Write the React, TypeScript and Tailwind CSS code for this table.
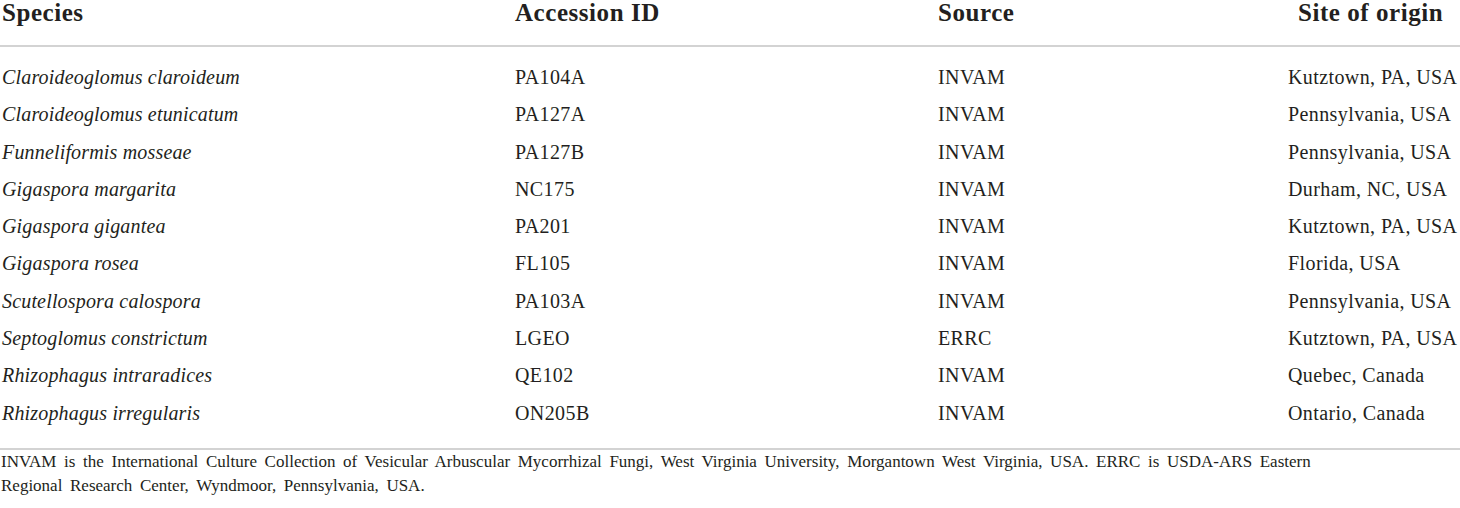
const rows = [
  ["Claroideoglomus claroideum", "PA104A", "INVAM", "Kutztown, PA, USA"],
  ["Claroideoglomus etunicatum", "PA127A", "INVAM", "Pennsylvania, USA"],
  ["Funneliformis mosseae", "PA127B", "INVAM", "Pennsylvania, USA"],
  ["Gigaspora margarita", "NC175", "INVAM", "Durham, NC, USA"],
  ["Gigaspora gigantea", "PA201", "INVAM", "Kutztown, PA, USA"],
  ["Gigaspora rosea", "FL105", "INVAM", "Florida, USA"],
  ["Scutellospora calospora", "PA103A", "INVAM", "Pennsylvania, USA"],
  ["Septoglomus constrictum", "LGEO", "ERRC", "Kutztown, PA, USA"],
  ["Rhizophagus intraradices", "QE102", "INVAM", "Quebec, Canada"],
  ["Rhizophagus irregularis", "ON205B", "INVAM", "Ontario, Canada"],
];

export default function App() {
  return (
    <div
      className="w-[1460px] h-[508px] bg-white text-[#231f20] overflow-hidden"
      style={{ fontFamily: '"Liberation Serif", "Times New Roman", serif' }}
    >
      {/* header */}
      <div className="grid grid-cols-[515px_423px_350px_172px] h-[47px] border-b-2 border-[#d3d3d3] text-[25px] leading-[25px] tracking-[0.55px] font-bold whitespace-nowrap">
        <div className="pl-[2px]">Species</div>
        <div>Accession ID</div>
        <div>Source</div>
        <div className="pl-[10px]">Site of origin</div>
      </div>

      {/* body */}
      <div className="pt-[12px] pb-[16px] border-b-2 border-[#d3d3d3]">
        {rows.map((r) => (
          <div
            key={r[0]}
            className="grid grid-cols-[515px_423px_350px_172px] h-[37.3px] text-[20px] leading-[37.3px] tracking-[0.4px] whitespace-nowrap"
          >
            <div className="pl-[2px] italic tracking-[0.17px]">{r[0]}</div>
            <div>{r[1]}</div>
            <div>{r[2]}</div>
            <div>{r[3]}</div>
          </div>
        ))}
      </div>

      {/* footnote */}
      <p className="text-[17px] leading-[24px] pl-[1px] [word-spacing:3.4px] whitespace-nowrap">
        INVAM is the International Culture Collection of Vesicular Arbuscular Mycorrhizal Fungi, West Virginia University, Morgantown West Virginia, USA. ERRC is USDA-ARS Eastern
        <br />
        Regional Research Center, Wyndmoor, Pennsylvania, USA.
      </p>
    </div>
  );
}
